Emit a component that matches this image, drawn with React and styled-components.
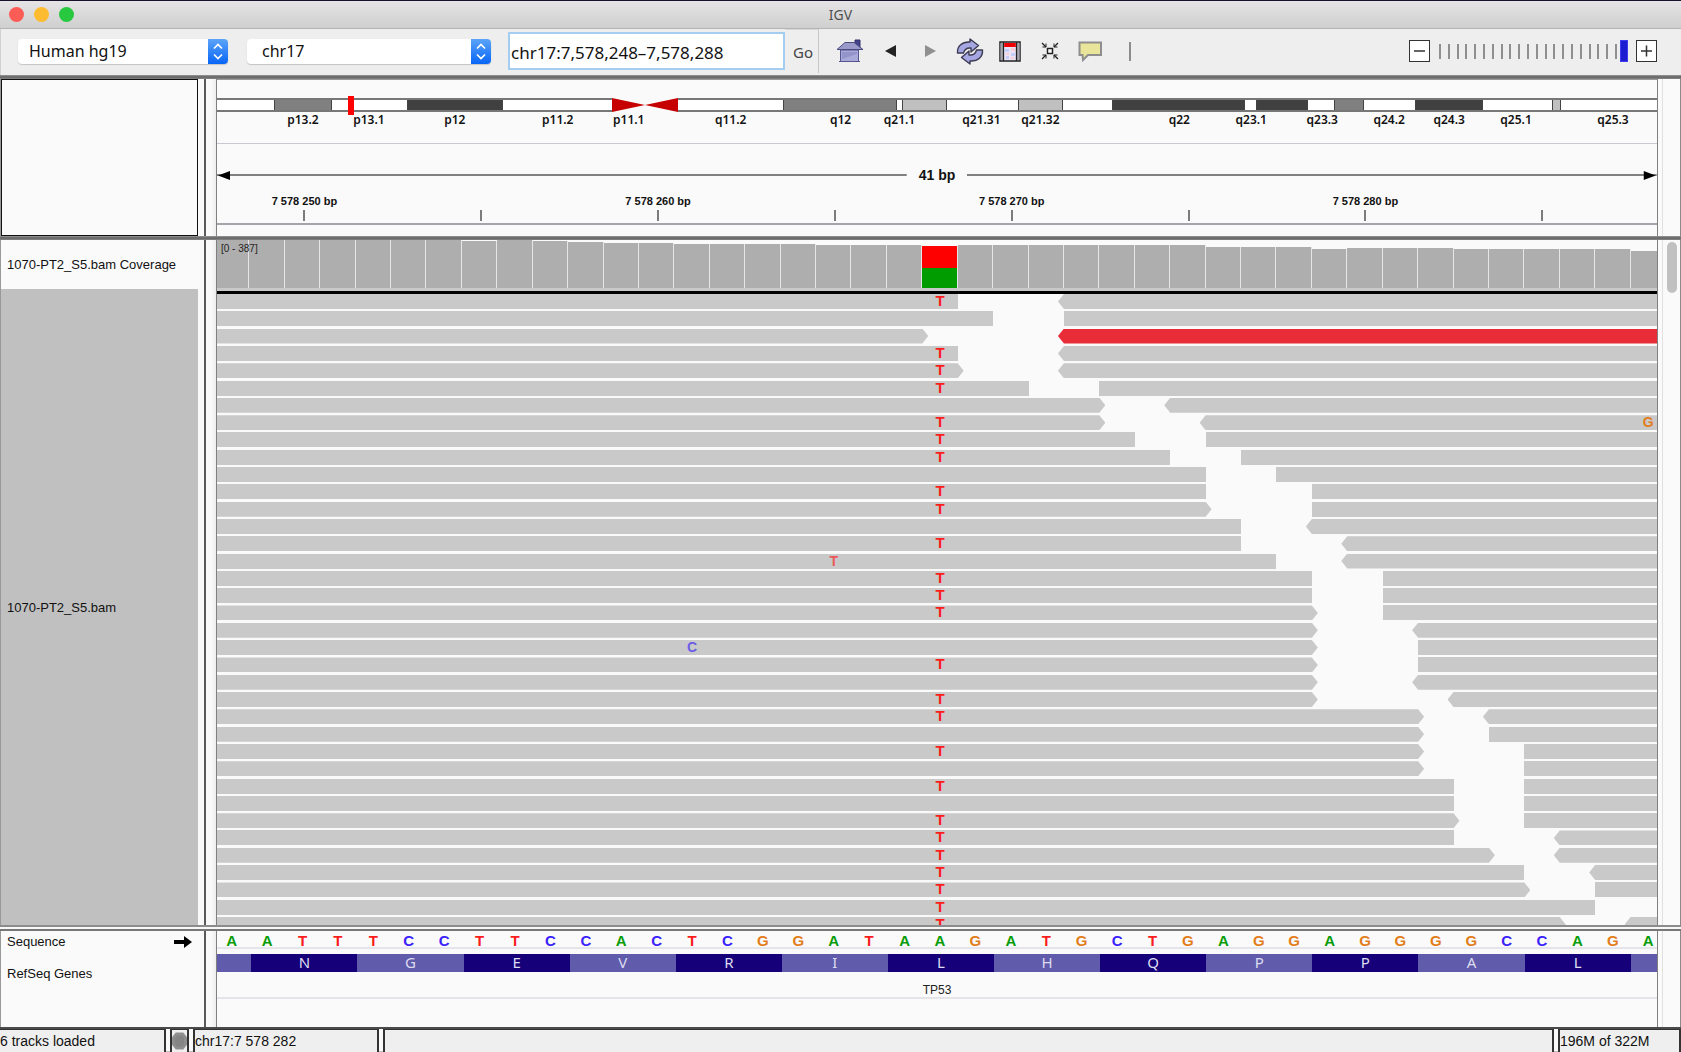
import React from "react";
import styled, { createGlobalStyle } from "styled-components";

const ui = `"Noto Sans", "Open Sans", sans-serif`;
const arial = `"Liberation Sans", Arial, sans-serif`;

const GlobalStyle = createGlobalStyle`
  *, *::before, *::after { box-sizing: border-box; }
  body { margin: 0; background: #eeeeee; color: #111; font-family: ${arial}; }
  button, input, select { margin: 0; font: inherit; color: inherit; }
`;

/* ---------- data ---------- */

const SEQUENCE = "AATTTCCTTCCACTCGGATAAGATGCTGAGGAGGGGCCAGA";
const AMINO = ["", "N", "G", "E", "V", "R", "I", "L", "H", "Q", "P", "P", "A", "L", ""];
const BASE_COLORS = { A: "#089c08", T: "#fb1c1c", C: "#3a22fb", G: "#e27d1a" };

const BANDS = [
  [57, "#fff"], [58, "#808080"], [75, "#fff"], [96, "#404040"], [109, "#fff"],
  [66, "cen"], [105, "#fff"], [114, "#808080"], [5, "#fff"], [45, "#c0c0c0"],
  [71, "#fff"], [45, "#c0c0c0"], [49, "#fff"], [133, "#404040"], [11, "#fff"],
  [52, "#404040"], [26, "#fff"], [30, "#808080"], [51, "#fff"], [68, "#404040"],
  [69, "#fff"], [9, "#c0c0c0"], [96, "#fff"],
];

const BAND_LABELS = [
  [86, "p13.2"], [66, "p13.1"], [86, "p12"], [103, "p11.2"], [71, "p11.1"],
  [102, "q11.2"], [110, "q12"], [59, "q21.1"], [82, "q21.31"], [59, "q21.32"],
  [139, "q22"], [72, "q23.1"], [71, "q23.3"], [67, "q24.2"], [60, "q24.3"],
  [67, "q25.1"], [97, "q25.3"],
];

const COVERAGE = [
  48, 48, 48, 48, 48, 48, 48, 47, 48, 47, 46, 45, 45, 44, 44, 44, 44, 43, 43, 43, 42,
  43, 43, 43, 43, 43, 43, 43, 41, 41, 41, 39, 40, 40, 40, 39, 39, 39, 39, 39, 37,
];

/* end of left read, has arrow, start of right read, has arrow, carries the T variant */
const ROWS = [
  [21, 0, 24, 1, 1], [22, 0, 24, 0, 0], [20, 1, 24, 1, 0], [21, 0, 24, 1, 1],
  [21, 1, 24, 1, 1], [23, 0, 25, 0, 1], [25, 1, 27, 1, 0], [25, 1, 28, 1, 1],
  [26, 0, 28, 0, 1], [27, 0, 29, 0, 1], [28, 0, 30, 0, 0], [28, 0, 31, 0, 1],
  [28, 1, 31, 0, 1], [29, 0, 31, 1, 0], [29, 0, 32, 1, 1], [30, 0, 32, 1, 0],
  [31, 0, 33, 0, 1], [31, 0, 33, 0, 1], [31, 1, 33, 0, 1], [31, 1, 34, 1, 0],
  [31, 1, 34, 0, 0], [31, 1, 34, 0, 1], [31, 1, 34, 1, 0], [31, 1, 35, 1, 1],
  [34, 1, 36, 1, 1], [34, 1, 36, 0, 0], [34, 1, 37, 0, 1], [34, 1, 37, 0, 0],
  [35, 0, 37, 0, 1], [35, 0, 37, 0, 0], [35, 1, 37, 0, 1], [35, 0, 38, 1, 1],
  [36, 1, 38, 1, 1], [37, 0, 39, 1, 1], [37, 1, 39, 0, 1], [39, 0, 41, 0, 1],
  [38, 1, 40, 1, 1],
];

const EXTRA = {
  7: { col: 41, base: "G", faint: false },
  15: { col: 18, base: "T", faint: true },
  20: { col: 14, base: "C", faint: true },
};

/* ---------- window and toolbar ---------- */

const Window = styled.div`
  display: flex;
  flex-direction: column;
  height: 100vh;
  min-height: 600px;
  overflow: hidden;
  border-top: 1px solid #17122b;
`;

const TitleBar = styled.header`
  display: grid;
  grid-template-columns: 1fr auto 1fr;
  align-items: center;
  flex: none;
  height: 28px;
  padding: 0 9px;
  background: linear-gradient(#e6e4e6, #cfcfcf);
  border-bottom: 1px solid #b4b4b4;
`;

const Lights = styled.div`
  display: flex;
  gap: 10px;
`;

const Light = styled.button`
  width: 15px;
  height: 15px;
  padding: 0;
  border: 0;
  border-radius: 50%;
  background: ${(p) => p.$color};
`;

const Title = styled.h1`
  margin: 0;
  font: 400 14px/20px ${ui};
  color: #505050;
`;

const Toolbar = styled.div`
  display: flex;
  flex: none;
  align-items: center;
  height: 46px;
  padding: 0 24px 2px 17px;
  background: #eeeeee;
  border-left: 1px solid #d0d0d0;
  font: 400 16px/22px ${ui};
`;

const SelectBox = styled.label`
  display: grid;
  width: ${(p) => p.$width}px;
  height: 25px;
  margin-right: ${(p) => p.$gap}px;
  border-radius: 4px;
  overflow: hidden;
  background: #fff;
  box-shadow: 0 1px 1px #c4c4c4;
`;

const Select = styled.select`
  grid-area: 1 / 1;
  width: 100%;
  padding: 0 24px 0 ${(p) => p.$indent}px;
  border: 0;
  appearance: none;
  background: transparent;
`;

const Stepper = styled.svg`
  grid-area: 1 / 1;
  justify-self: end;
  pointer-events: none;
`;

const LocusInput = styled.input`
  width: 277px;
  height: 38px;
  padding: 2px 1px 0;
  border: 2px solid #a5cdf2;
  background: #fff;
  font-size: 17px;
  outline: none;
`;

const GoArea = styled.div`
  display: flex;
  align-items: center;
  align-self: stretch;
  width: 34px;
  padding-left: 8px;
  border-right: 1px solid #c8c8c8;
  border-top: 1px solid #d8d8d8;
`;

const GoButton = styled.button`
  padding: 0;
  border: 0;
  background: none;
  font-size: 15px;
  color: #444;
`;

const IconRow = styled.div`
  display: grid;
  grid-template-columns: repeat(8, 40px);
  justify-items: center;
  align-items: center;
  padding-left: 11px;
`;

const IconButton = styled.button`
  display: flex;
  padding: 0;
  border: 0;
  background: none;
`;

const Separator = styled.div`
  width: 2px;
  height: 19px;
  background: #8c8c8c;
`;

const Zoom = styled.div`
  display: flex;
  align-items: center;
  margin-left: auto;
`;

const ZoomButton = styled.button`
  display: flex;
  padding: 0;
  border: 1px solid #333;
  background: #fff;
`;

const Slider = styled.div`
  display: grid;
  align-items: center;
  width: 189px;
  margin: 0 8px 0 9px;
`;

const Ticks = styled.div`
  grid-area: 1 / 1;
  display: flex;
  justify-content: space-between;
  width: 178px;
`;

const Tick = styled.i`
  width: 2px;
  height: 15px;
  background: #8f8f8f;
`;

const Range = styled.input`
  grid-area: 1 / 1;
  width: 100%;
  height: 22px;
  appearance: none;
  background: transparent;
  &::-webkit-slider-thumb {
    appearance: none;
    width: 8px;
    height: 22px;
    border: 1px solid #3c3cf0;
    background: #1d1dcf;
  }
`;

/* ---------- panels ---------- */

const Divider = styled.div`
  flex: none;
  height: 4px;
  background: linear-gradient(#9a9a9a, #6c6c6c 40%, #6c6c6c 75%, #8f8f8f);
`;

const SplitBar = styled.div`
  flex: none;
  height: 6px;
  border-top: 2px solid #8c8c8c;
  border-bottom: 2px solid #777;
  background: #f8f8f8;
`;

const Panel = styled.section`
  display: grid;
  grid-template-columns: 205px 10px minmax(0, 1fr) 23px;
  flex: ${(p) => (p.$grow ? "1 1 0" : "none")};
  min-height: 0;
  background: #fafafa;
  border-left: 1px solid #999;
`;

const Names = styled.div`
  display: flex;
  flex-direction: column;
  min-height: 0;
  border-right: 2px solid #5a5a5a;
  font-size: 13px;
  line-height: 16px;
`;

const NameBox = styled.div`
  flex: 1;
  width: 197px;
  border: 1px solid #111;
`;

const TrackName = styled.div`
  display: flex;
  align-items: center;
  justify-content: space-between;
  width: 197px;
  height: ${(p) => (p.$h ? `${p.$h}px` : "auto")};
  flex: ${(p) => (p.$h ? "none" : "1")};
  padding: 1px 6px 0;
  background: ${(p) => (p.$selected ? "#c0c0c0" : "transparent")};
`;

const Gutter = styled.div`
  background: linear-gradient(90deg, #fafafa 50%, #eeeeee);
`;

const Data = styled.div`
  display: flex;
  flex-direction: column;
  min-width: 0;
  min-height: 0;
  overflow: hidden;
  border-left: 1px solid #808080;
  border-right: 1px solid #808080;
`;

const ScrollLane = styled.div`
  padding: 2px 3px 0 4px;
  margin-left: 4px;
  border-left: 1px solid #e0e0e0;
  border-right: 1px solid #8a8a8a;
  background: #fafafa;
`;

const Thumb = styled.div`
  width: 10px;
  height: 51px;
  border-radius: 5px;
  background: #c1c1c1;
`;

/* ---------- ideogram and ruler ---------- */

const Ideogram = styled.div`
  flex: none;
  height: 65px;
  padding-top: 18px;
  border-top: 1px solid #999;
  border-bottom: 1px solid #c9c9d2;
`;

const Chromosome = styled.div`
  position: relative;
  display: flex;
  height: 14px;
  border: solid #777;
  border-width: 2px 0;
  background: #fff;
`;

const Band = styled.div`
  flex: ${(p) => p.$w} 0 0;
  background: ${(p) => p.$color};
  box-shadow: ${(p) => (p.$color === "#fff" ? "none" : "inset 1px 0 #444, inset -1px 0 #444")};
`;

const Centromere = styled.svg`
  flex: ${(p) => p.$w} 0 0;
  min-width: 0;
  height: 14px;
  margin: -2px 0;
  background: #fafafa;
`;

const Marker = styled.div`
  position: absolute;
  left: 9.1%;
  top: -4px;
  width: 6px;
  height: 19px;
  background: #f00;
`;

const BandLabels = styled.div`
  display: flex;
  font: 600 12px/16px ${ui};
  color: #111;
`;

const BandLabel = styled.div`
  display: flex;
  justify-content: flex-end;
  flex: ${(p) => p.$w} 0 0;
  min-width: 0;
`;

const Centered = styled.span`
  display: flex;
  justify-content: center;
  width: 0;
  white-space: nowrap;
`;

const LabelRest = styled.div`
  flex: 44 0 0;
`;

const Span = styled.div`
  display: flex;
  align-items: center;
  flex: none;
  height: 22px;
  margin-top: 20px;
  font-size: 14px;
  font-weight: 700;
`;

const SpanLine = styled.svg`
  flex: 1;
  min-width: 0;
  height: 9px;
`;

const SpanText = styled.span`
  padding: 0 12px;
`;

const Bases = styled.div`
  display: grid;
  flex: none;
  grid-template-columns: repeat(41, minmax(0, 1fr));
  margin: 0 -9px 0 ${(p) => (p.$wide ? "-3px" : "-1px")};
`;

const RulerBases = styled(Bases)`
  height: 39px;
  padding-top: 8px;
  border-bottom: 2px solid #a4a4aa;
`;

const Mark = styled.div`
  grid-column: ${(p) => p.$col};
  display: flex;
  flex-direction: column;
  align-items: center;
  justify-content: space-between;
  justify-self: center;
  font: 700 11px/14px ${arial};
  white-space: nowrap;
  &::after {
    content: "";
    width: 2px;
    height: 11px;
    margin-bottom: 2px;
    background: #7c7c7c;
  }
`;

const RulerFoot = styled.div`
  flex: none;
  height: 11px;
`;

/* ---------- alignment tracks ---------- */

const CoverageTrack = styled(Bases)`
  position: relative;
  align-items: end;
  height: 48px;
  background: #fafafa;
`;

const Bar = styled.div`
  height: ${(p) => p.$h}px;
  border-right: 1px solid #e6e6e6;
  background: ${(p) =>
    p.$variant ? "linear-gradient(#f00 22px, #009c00 22px)" : "#aeaeae"};
`;

const RangeText = styled.span`
  position: absolute;
  left: 7px;
  top: 3px;
  font-size: 10px;
  line-height: 12px;
  color: #222;
`;

const BlackRule = styled.div`
  flex: none;
  height: 6px;
  border-top: 3px solid #c8c8c8;
  background: #000;
`;

const Reads = styled.div`
  display: grid;
  flex: 1;
  min-height: 0;
  grid-template-rows: repeat(36, minmax(0, 1fr)) 8px;
  overflow: hidden;
`;

const Row = styled(Bases)`
  height: 15px;
`;

const LeftRead = styled.div`
  grid-row: 1;
  grid-column: 1 / ${(p) => p.$end + 1};
  height: 15px;
  margin-right: ${(p) => (p.$arrow ? "-6px" : "0")};
  background: #c9c9c9;
  clip-path: ${(p) =>
    p.$arrow
      ? "polygon(0 0, calc(100% - 6px) 0, 100% 50%, calc(100% - 6px) 100%, 0 100%)"
      : "none"};
`;

const RightRead = styled.div`
  grid-row: 1;
  grid-column: ${(p) => p.$start + 1} / 42;
  height: 15px;
  margin-left: ${(p) => (p.$arrow ? "-6px" : "0")};
  background: ${(p) => (p.$red ? "#e92d38" : "#c9c9c9")};
  clip-path: ${(p) =>
    p.$arrow ? "polygon(6px 0, 100% 0, 100% 100%, 6px 100%, 0 50%)" : "none"};
`;

const Mismatch = styled.span`
  grid-row: 1;
  grid-column: ${(p) => p.$col};
  justify-self: center;
  z-index: 1;
  font: 700 ${(p) => (p.$small ? 14 : 15)}px/14px ${arial};
  color: ${(p) => p.$color};
  opacity: ${(p) => (p.$faint ? 0.65 : 1)};
`;

/* ---------- features ---------- */

const SequenceTrack = styled(Bases)`
  justify-items: center;
  height: 18px;
  border-bottom: 2px solid #e4e4ea;
  font: 700 15px/19px ${arial};
`;

const Base = styled.span`
  color: ${(p) => BASE_COLORS[p.$base]};
`;

const AminoTrack = styled(Bases)`
  height: 18px;
  margin-top: 5px;
`;

const Amino = styled.div`
  grid-column: span ${(p) => p.$span};
  height: 18px;
  background: ${(p) => (p.$dark ? "#15007a" : "#605bab")};
  font: 400 15px/17px ${ui};
  text-align: center;
  color: #dddcf0;
`;

const GeneName = styled.div`
  flex: none;
  height: 27px;
  padding-top: 10px;
  border-bottom: 2px solid #e4e4ea;
  font-size: 12px;
  line-height: 16px;
  text-align: center;
  color: #222;
`;

const FeatureSpace = styled.div`
  height: 28px;
`;

const StatusBar = styled.footer`
  display: grid;
  grid-template-columns: 166px 19px 186px minmax(0, 1fr) 123px;
  gap: 4px;
  flex: none;
  height: 25px;
  border-top: 2px solid #4a4a4a;
  border-bottom: 1px solid #c0c0c0;
  background: #fafafa;
  font-size: 14px;
  line-height: 22px;
`;

const StatusCell = styled.div`
  display: flex;
  align-items: center;
  border: solid #333;
  border-width: 1px 2px 0;
  background: #efefef;
  white-space: nowrap;
`;

const FirstCell = styled(StatusCell)`
  border-left: 0;
`;

/* ---------- icons ---------- */

const HomeIcon = () => (
  <svg width="28" height="24" viewBox="0 0 28 24">
    <path d="M19 1h5v8h-5z" fill="#43438a" stroke="#34346c" />
    <path d="M4.500 11h18v11.500h-18z" fill="#a9a9da" stroke="#55558f" />
    <path d="M6 13l15 0v2L6 20z" fill="#9494cd" />
    <path d="M1 10.500L9 3.500h9L27 10.500z" fill="#9a9acb" stroke="#4b4b80" />
    <path d="M3 22.500h21" stroke="#55558f" />
  </svg>
);

const TriangleIcon = ({ back }) => (
  <svg width="11" height="12" viewBox="0 0 11 12">
    <path d={back ? "M11 0v12L0 6z" : "M0 0v12L11 6z"} fill={back ? "#222" : "#8f8f8f"} />
  </svg>
);

const RefreshIcon = () => (
  <svg width="28" height="27" viewBox="0 0 28 27">
    <g fill="#a6a6e2" stroke="#3b3b52" strokeWidth="1.400" strokeLinejoin="round">
      <path d="M1.500 15C1 8 6 3.500 14 4V1l8.500 6.500L15 14v-4C10.500 9.500 8.500 11 7.500 15z" />
      <path d="M26.500 12C27 19 22 23.500 14 23V26l-8.500-6.500L13 13v4c4.500.5 6.500-1 7.500-5z" />
    </g>
  </svg>
);

const RegionIcon = () => (
  <svg width="22" height="21" viewBox="0 0 22 21">
    <path d="M1 1h20v19H1z" fill="#e9e4f6" stroke="#222" strokeWidth="1.500" />
    <path d="M1.500 2h3v17h-3zM17.500 2h3v17h-3z" fill="#a5a5ae" />
    <path d="M4.500 1v19M17.500 1v19" stroke="#222" strokeWidth="1.300" />
    <path d="M5.200 2h11.600v4H5.200z" fill="#f00000" />
    <path d="M6 8h4v3H6zM12 12h4v3h-4zM7 15h3v3H7z" fill="#c5cdfb" />
    <path d="M12 7h4v3h-4zM7 12h3v2H7zM12 16h3v2h-3z" fill="#fbcdd6" />
  </svg>
);

const FitIcon = () => (
  <svg width="18" height="18" viewBox="0 0 18 18" fill="none" stroke="#222" strokeWidth="1.300">
    <path d="M6.500 6.500h5v5h-5z" fill="#fff" strokeWidth="1.500" />
    <path d="M1 1l4 4M17 1l-4 4M1 17l4-4M17 17l-4-4" />
    <path d="M1.500 5h3.500V1.500M16.500 5H13V1.500M1.500 13H5v3.500M16.500 13H13v3.500" strokeWidth="1" />
  </svg>
);

const BubbleIcon = () => (
  <svg width="25" height="21" viewBox="0 0 25 21">
    <path d="M1.500 1.500h21.500v12.500H10L5 19l-.5-5h-3z" fill="#e9e59b" stroke="#8e8e8e" strokeWidth="2" />
  </svg>
);

const SignIcon = ({ plus }) => (
  <svg width="19" height="20" viewBox="0 0 19 20">
    <path d={plus ? "M4 10h11M9.500 4.500v11" : "M4 10h11"} stroke="#333" strokeWidth="1.500" />
  </svg>
);

const StepperArt = () => (
  <Stepper width="20" height="25" viewBox="0 0 20 25" aria-hidden="true">
    <defs>
      <linearGradient id="stepper" x2="0" y2="1">
        <stop offset="0" stopColor="#5ba4f8" />
        <stop offset="1" stopColor="#0865f7" />
      </linearGradient>
    </defs>
    <path d="M0 0h20v25H0z" fill="url(#stepper)" />
    <path d="M6 9.500l4-4 4 4M6 15.500l4 4 4-4" fill="none" stroke="#fff" strokeWidth="1.700" />
  </Stepper>
);

const StrandArrow = () => (
  <svg width="18" height="12" viewBox="0 0 18 12">
    <path d="M0 4h10V0l8 6-8 6V8H0z" fill="#000" />
  </svg>
);

const ArrowLine = ({ right }) => (
  <SpanLine>
    <line x1="0" x2="100%" y1="4" y2="4" stroke="#808080" strokeWidth="2" />
    {right ? (
      <svg x="100%" overflow="visible">
        <path d="M-13 0L-1 4.500L-13 9z" fill="#000" />
      </svg>
    ) : (
      <path d="M13 0L1 4.500L13 9z" fill="#000" />
    )}
  </SpanLine>
);

/* ---------- page ---------- */

function Header() {
  return (
    <>
      <TitleBar>
        <Lights>
          <Light $color="#fc5c56" aria-label="Close" />
          <Light $color="#fdbc2f" aria-label="Minimize" />
          <Light $color="#28c840" aria-label="Zoom window" />
        </Lights>
        <Title>IGV</Title>
      </TitleBar>
      <Toolbar>
        <SelectBox $width={210} $gap={19}>
          <Select $indent={11} aria-label="Genome" defaultValue="Human hg19">
            <option>Human hg19</option>
          </Select>
          <StepperArt />
        </SelectBox>
        <SelectBox $width={244} $gap={17}>
          <Select $indent={15} aria-label="Chromosome" defaultValue="chr17">
            <option>chr17</option>
          </Select>
          <StepperArt />
        </SelectBox>
        <LocusInput aria-label="Locus" defaultValue="chr17:7,578,248–7,578,288" />
        <GoArea>
          <GoButton>Go</GoButton>
        </GoArea>
        <IconRow>
          <IconButton aria-label="Home"><HomeIcon /></IconButton>
          <IconButton aria-label="Back"><TriangleIcon back /></IconButton>
          <IconButton aria-label="Forward"><TriangleIcon /></IconButton>
          <IconButton aria-label="Refresh"><RefreshIcon /></IconButton>
          <IconButton aria-label="Define region"><RegionIcon /></IconButton>
          <IconButton aria-label="Fit to window"><FitIcon /></IconButton>
          <IconButton aria-label="Popup text"><BubbleIcon /></IconButton>
          <Separator />
        </IconRow>
        <Zoom>
          <ZoomButton aria-label="Zoom out"><SignIcon /></ZoomButton>
          <Slider>
            <Ticks>{Array.from({ length: 21 }, (_, i) => <Tick key={i} />)}</Ticks>
            <Range type="range" min="0" max="21" defaultValue="21" aria-label="Zoom level" />
          </Slider>
          <ZoomButton aria-label="Zoom in"><SignIcon plus /></ZoomButton>
        </Zoom>
      </Toolbar>
    </>
  );
}

function LocationPanel() {
  return (
    <Panel>
      <Names><NameBox /></Names>
      <Gutter />
      <Data>
        <Ideogram>
          <Chromosome>
            {BANDS.map(([w, color], i) =>
              color === "cen" ? (
                <Centromere key={i} $w={w} viewBox="0 0 66 14" preserveAspectRatio="none">
                  <path d="M0 0L33 7L0 14zM66 0L33 7L66 14z" fill="#c60000" />
                </Centromere>
              ) : (
                <Band key={i} $w={w} $color={color} />
              )
            )}
            <Marker />
          </Chromosome>
          <BandLabels>
            {BAND_LABELS.map(([w, text]) => (
              <BandLabel key={text} $w={w}><Centered>{text}</Centered></BandLabel>
            ))}
            <LabelRest />
          </BandLabels>
        </Ideogram>
        <Span>
          <ArrowLine />
          <SpanText>41 bp</SpanText>
          <ArrowLine right />
        </Span>
        <RulerBases>
          {[3, 8, 13, 18, 23, 28, 33, 38].map((col) => (
            <Mark key={col} $col={col}>
              <span>{col % 10 === 3 ? `7 578 ${247 + col} bp` : ""}</span>
            </Mark>
          ))}
        </RulerBases>
        <RulerFoot />
      </Data>
      <ScrollLane />
    </Panel>
  );
}

function AlignmentPanel() {
  return (
    <Panel $grow>
      <Names>
        <TrackName $h={49}>1070-PT2_S5.bam Coverage</TrackName>
        <TrackName $selected>1070-PT2_S5.bam</TrackName>
      </Names>
      <Gutter />
      <Data>
        <CoverageTrack $wide>
          {COVERAGE.map((h, i) => <Bar key={i} $h={h} $variant={i === 20} />)}
          <RangeText>[0 - 387]</RangeText>
        </CoverageTrack>
        <BlackRule />
        <Reads>
          {ROWS.map(([end, endArrow, start, startArrow, variant], i) => (
            <Row key={i} $wide>
              <LeftRead $end={end} $arrow={endArrow} />
              {start < 41 && <RightRead $start={start} $arrow={startArrow} $red={i === 2} />}
              {variant === 1 && <Mismatch $col={21} $color={BASE_COLORS.T}>T</Mismatch>}
              {EXTRA[i] && (
                <Mismatch
                  $small
                  $col={EXTRA[i].col}
                  $color={BASE_COLORS[EXTRA[i].base]}
                  $faint={EXTRA[i].faint}
                >
                  {EXTRA[i].base}
                </Mismatch>
              )}
            </Row>
          ))}
        </Reads>
      </Data>
      <ScrollLane><Thumb /></ScrollLane>
    </Panel>
  );
}

function FeaturePanel() {
  return (
    <Panel>
      <Names>
        <TrackName $h={20}>Sequence<StrandArrow /></TrackName>
        <TrackName $h={45}>RefSeq Genes</TrackName>
      </Names>
      <Gutter />
      <Data>
        <SequenceTrack $wide>
          {[...SEQUENCE].map((b, i) => <Base key={i} $base={b}>{b}</Base>)}
        </SequenceTrack>
        <AminoTrack>
          {AMINO.map((a, i) => (
            <Amino key={i} $span={a ? 3 : 1} $dark={i % 2 === 1}>{a}</Amino>
          ))}
        </AminoTrack>
        <GeneName>TP53</GeneName>
        <FeatureSpace />
      </Data>
      <ScrollLane />
    </Panel>
  );
}

export default function App() {
  return (
    <>
      <GlobalStyle />
      <Window>
        <Header />
        <Divider />
        <LocationPanel />
        <Divider />
        <AlignmentPanel />
        <SplitBar />
        <FeaturePanel />
        <StatusBar>
          <FirstCell>6 tracks loaded</FirstCell>
          <StatusCell>
            <svg width="15" height="18" viewBox="0 0 16 18">
              <path d="M4 0h8l4 5v8l-4 5H4l-4-5V5z" fill="#8f8f8f" />
              <path d="M5 3h6l2 3v6l-2 3H5l-2-3V6z" fill="#848484" />
            </svg>
          </StatusCell>
          <StatusCell>chr17:7 578 282</StatusCell>
          <StatusCell />
          <StatusCell>196M of 322M</StatusCell>
        </StatusBar>
      </Window>
    </>
  );
}
